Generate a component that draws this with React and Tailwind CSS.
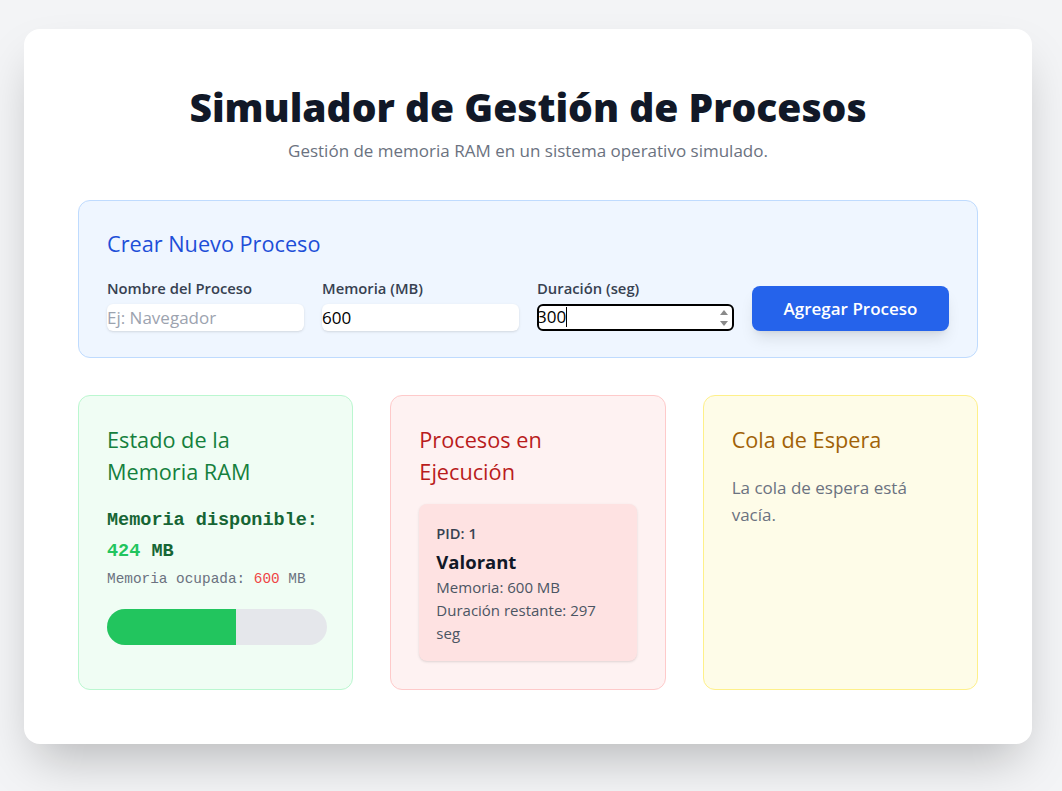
import React from 'react'

const sans = { fontFamily: '"Open Sans", sans-serif' }
const mono = { fontFamily: '"Liberation Mono", monospace' }

const TOTAL = 1024
const USED = 600

function Field({ label, children }) {
  return (
    <div className="flex flex-col">
      <label className="text-[14.8px] leading-5 font-semibold text-[#374151] mb-[5px]">{label}</label>
      {children}
    </div>
  )
}

export default function App() {
  const pct = (USED / TOTAL) * 100

  return (
    <div className="min-h-screen bg-[#f3f4f6] pt-[29px] pl-6 pb-12" style={sans}>
      <div className="w-[1008px] bg-white rounded-2xl shadow-2xl px-[54px] pt-[58px] pb-[54px]">
        <h1 className="text-center text-[39px] leading-10 font-extrabold text-[#111827]">
          Simulador de Gestión de Procesos
        </h1>
        <p className="text-center text-[17px] leading-6 text-[#6b7280] mt-3">
          Gestión de memoria RAM en un sistema operativo simulado.
        </p>

        <section className="mt-[37px] bg-[#eff6ff] border border-[#bfdbfe] rounded-xl px-7 pt-[27px] pb-[26px]">
          <h2 className="text-[21.7px] leading-8 text-[#1d4ed8] mb-[18px]">Crear Nuevo Proceso</h2>
          <div className="grid grid-cols-4 gap-[18px] items-end">
            <Field label="Nombre del Proceso">
              <input
                readOnly
                placeholder="Ej: Navegador"
                className="mt-px h-[27px] pb-px bg-white rounded-md shadow-sm text-[17px] text-black placeholder:text-[#9ca3af] outline-none"
              />
            </Field>
            <Field label="Memoria (MB)">
              <input
                readOnly
                value="600"
                className="mt-px h-[27px] pb-px bg-white rounded-md shadow-sm text-[17px] text-black outline-none"
              />
            </Field>
            <Field label="Duración (seg)">
              <div className="mt-px relative h-[27px] pb-px bg-white rounded-md border-2 border-black flex items-center text-[17px] text-black">
                <span className="-ml-[2px]">300</span>
                <span className="w-px h-[20px] bg-black"></span>
                <svg className="absolute right-[2px] top-[1px]" width="12" height="22" viewBox="0 0 12 22">
                  <path d="M2 8 L6 3 L10 8 Z" fill="#8a8a8a" />
                  <path d="M2 14 L6 19 L10 14 Z" fill="#8a8a8a" />
                </svg>
              </div>
            </Field>
            <button className="h-[45px] bg-[#2563eb] text-white font-semibold text-[17px] rounded-lg shadow-lg">
              Agregar Proceso
            </button>
          </div>
        </section>

        <div className="mt-[37px] grid grid-cols-3 gap-[37px]">
          <div className="bg-[#f0fdf4] border border-[#bbf7d0] rounded-xl p-7">
            <h3 className="text-[21.7px] leading-8 text-[#15803d]">Estado de la Memoria RAM</h3>
            <div className="mt-[17px] text-[18.5px] leading-[31px] font-bold text-[#166534]" style={mono}>
              Memoria disponible: <span className="text-[#22c55e]">{TOTAL - USED}</span> MB
            </div>
            <div className="mt-0.5 text-[14.4px] leading-5 text-[#6b7280]" style={mono}>
              Memoria ocupada: <span className="text-[#ef4444]">{USED}</span> MB
            </div>
            <div className="mt-5 h-9 w-[220px] bg-[#e5e7eb] rounded-full overflow-hidden">
              <div className="h-full bg-[#22c55e]" style={{ width: pct + '%' }}></div>
            </div>
          </div>

          <div className="bg-[#fef2f2] border border-[#fecaca] rounded-xl p-7">
            <h3 className="text-[21.7px] leading-8 text-[#b91c1c]">Procesos en Ejecución</h3>
            <div className="mt-4 bg-[#fee2e2] rounded-lg shadow-sm px-[17px] pt-[19px] pb-4">
              <div className="text-[14.7px] leading-5 font-semibold text-[#374151]">PID: 1</div>
              <div className="mt-[5px] text-[18.5px] leading-7 font-bold text-[#111827]">Valorant</div>
              <div className="text-[15px] leading-[23px] text-[#4b5563]">Memoria: 600 MB</div>
              <div className="text-[15px] leading-[23px] text-[#4b5563]">Duración restante: 297 seg</div>
            </div>
          </div>

          <div className="bg-[#fefce8] border border-[#fef08a] rounded-xl p-7">
            <h3 className="text-[21.7px] leading-8 text-[#a16207]">Cola de Espera</h3>
            <p className="mt-[18px] text-[17px] leading-[27px] text-[#6b7280]">La cola de espera está vacía.</p>
          </div>
        </div>
      </div>
    </div>
  )
}
